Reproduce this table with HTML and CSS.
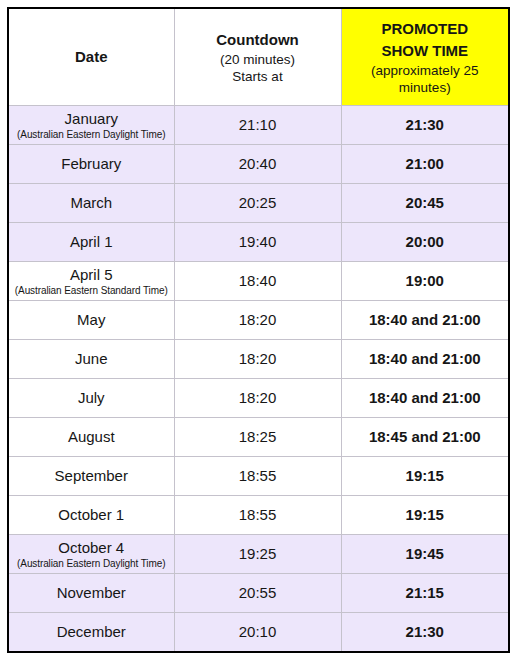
FILE: index.html
```html
<!DOCTYPE html>
<html>
<head>
<meta charset="utf-8">
<link rel="stylesheet" href="styles.css">
</head>
<body>
<table class="schedule">
  <colgroup><col class="c1"><col class="c2"><col class="c3"></colgroup>
  <thead>
    <tr class="head">
      <th><div class="h-bold">Date</div></th>
      <th><div class="h-bold">Countdown</div><div class="h-sub">(20 minutes)<br>Starts at</div></th>
      <th class="promo"><div class="h-bold">PROMOTED<br>SHOW TIME</div><div class="h-sub">(approximately 25<br>minutes)</div></th>
    </tr>
  </thead>
  <tbody>
    <tr class="dst"><td><div class="month">January</div><div class="note">(Australian Eastern Daylight Time)</div></td><td>21:10</td><td class="show">21:30</td></tr>
    <tr class="dst"><td>February</td><td>20:40</td><td class="show">21:00</td></tr>
    <tr class="dst"><td>March</td><td>20:25</td><td class="show">20:45</td></tr>
    <tr class="dst"><td>April 1</td><td>19:40</td><td class="show">20:00</td></tr>
    <tr><td><div class="month">April 5</div><div class="note">(Australian Eastern Standard Time)</div></td><td>18:40</td><td class="show">19:00</td></tr>
    <tr><td>May</td><td>18:20</td><td class="show">18:40 and 21:00</td></tr>
    <tr><td>June</td><td>18:20</td><td class="show">18:40 and 21:00</td></tr>
    <tr><td>July</td><td>18:20</td><td class="show">18:40 and 21:00</td></tr>
    <tr><td>August</td><td>18:25</td><td class="show">18:45 and 21:00</td></tr>
    <tr><td>September</td><td>18:55</td><td class="show">19:15</td></tr>
    <tr><td>October 1</td><td>18:55</td><td class="show">19:15</td></tr>
    <tr class="dst"><td><div class="month">October 4</div><div class="note">(Australian Eastern Daylight Time)</div></td><td>19:25</td><td class="show">19:45</td></tr>
    <tr class="dst"><td>November</td><td>20:55</td><td class="show">21:15</td></tr>
    <tr class="dst"><td>December</td><td>20:10</td><td class="show">21:30</td></tr>
  </tbody>
</table>
</body>
</html>
```

FILE: styles.css
```css
html, body {
  margin: 0;
  padding: 0;
  background: #ffffff;
}
body {
  padding: 7px 0 0 7px;
  font-family: "Liberation Sans", Arial, sans-serif;
  color: #161616;
}
.schedule {
  border-collapse: collapse;
  width: 501px;
  border: 2px solid #000;
  table-layout: fixed;
}
.c1 { width: 166px; }
.c2 { width: 167px; }
.c3 { width: 168px; }
.schedule th, .schedule td {
  border: 1px solid #c5c2cc;
  text-align: center;
  vertical-align: middle;
  padding: 0;
}
.schedule tr.head th {
  height: 96px;
  font-weight: normal;
  border-top: 2px solid #000;
}
.schedule tr.head th:first-child { border-left: 2px solid #000; }
.schedule tr.head th:last-child { border-right: 2px solid #000; }
.promo { background: #ffff00; }
.h-bold {
  font-weight: bold;
  font-size: 15px;
  line-height: 22px;
}
.h-sub {
  font-size: 13.5px;
  line-height: 17px;
}
.schedule td {
  height: 38px;
  font-size: 15px;
  line-height: 18px;
}
.schedule tr.dst td { background: #ede6fb; }
.schedule td.show { font-weight: bold; }
.month { line-height: 18px; }
.note {
  font-size: 10px;
  line-height: 13px;
  letter-spacing: -0.1px;
}
```
